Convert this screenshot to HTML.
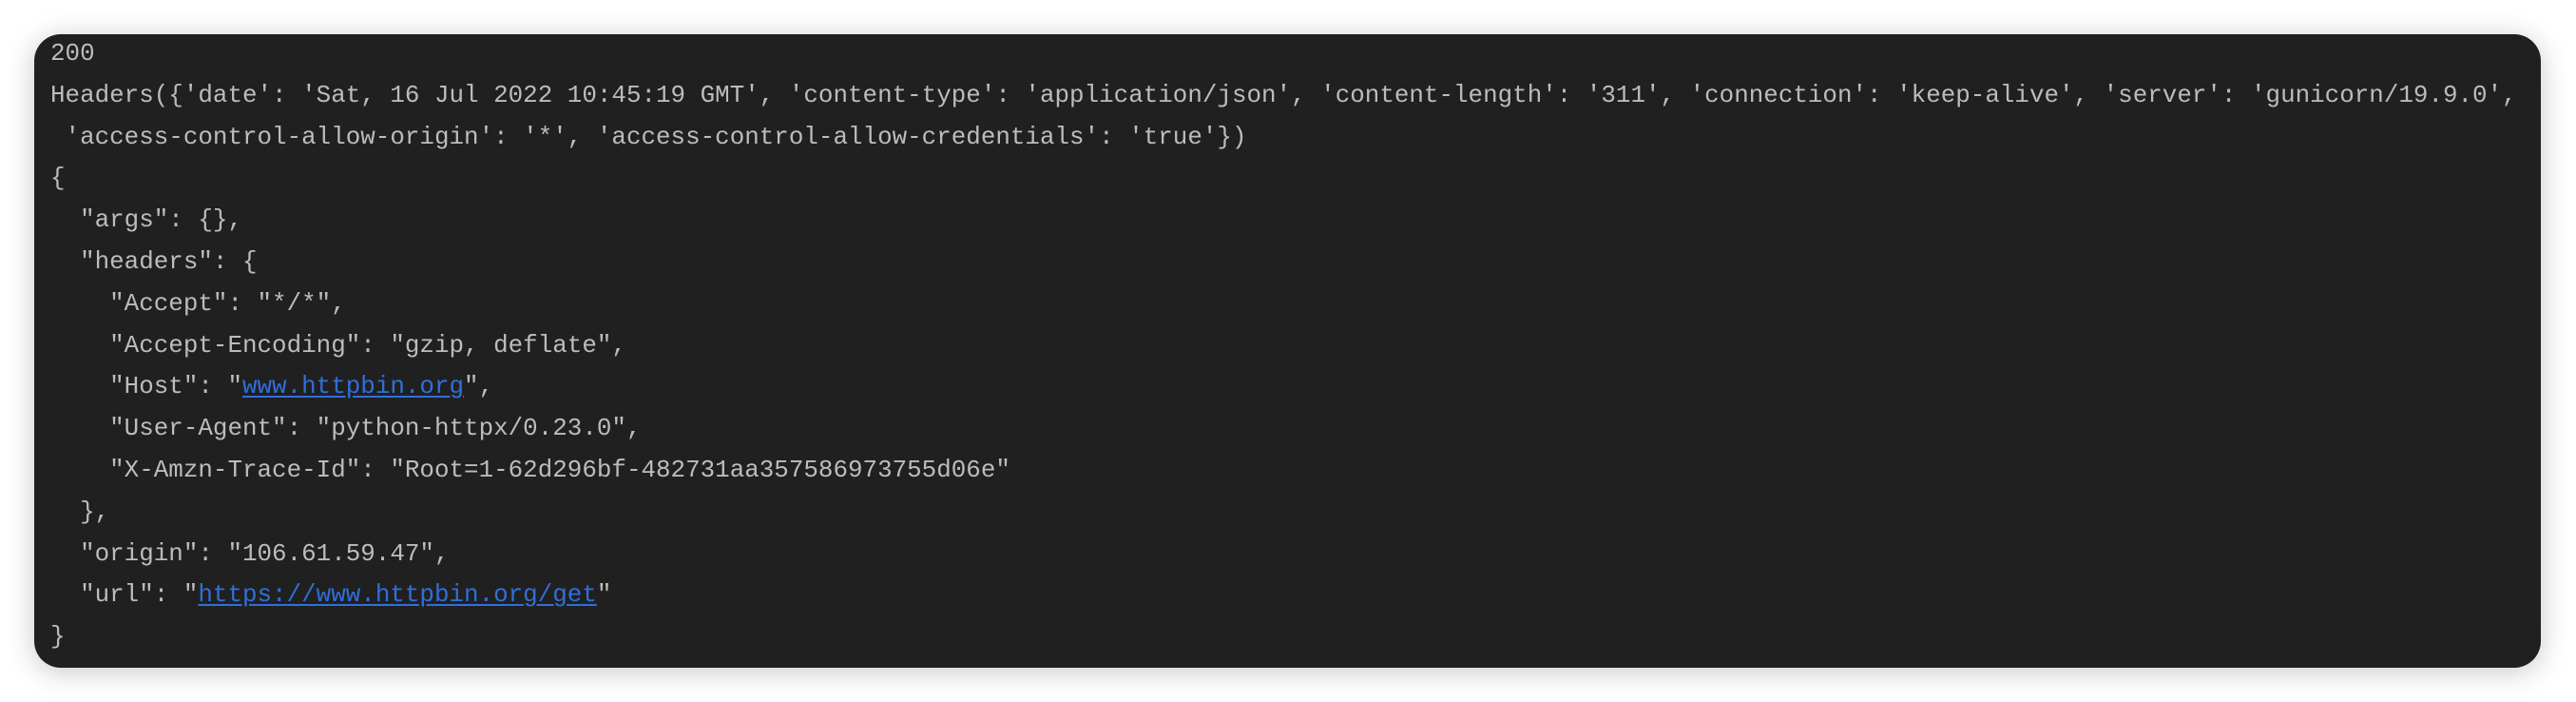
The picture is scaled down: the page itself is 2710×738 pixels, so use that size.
<!DOCTYPE html>
<html><head><meta charset="utf-8"><style>
html,body{margin:0;padding:0;background:#fff;width:2710px;height:738px;overflow:hidden}
.panel{position:absolute;left:36px;top:36px;width:2637px;height:666px;background:#202020;border-radius:28px;box-shadow:0 4px 30px rgba(0,0,0,0.22)}
pre{margin:0;position:absolute;left:17px;top:-1px;font-family:"Liberation Mono","DejaVu Sans Mono",monospace;font-size:25.9px;line-height:43.8px;color:#bcbcbc;white-space:pre}
a{color:#2f6fdc;text-decoration:underline;text-underline-offset:3px}
</style></head><body>
<div class="panel"><pre>200
Headers({'date': 'Sat, 16 Jul 2022 10:45:19 GMT', 'content-type': 'application/json', 'content-length': '311', 'connection': 'keep-alive', 'server': 'gunicorn/19.9.0',
 'access-control-allow-origin': '*', 'access-control-allow-credentials': 'true'})
{
  "args": {},
  "headers": {
    "Accept": "*/*",
    "Accept-Encoding": "gzip, deflate",
    "Host": "<a>www.httpbin.org</a>",
    "User-Agent": "python-httpx/0.23.0",
    "X-Amzn-Trace-Id": "Root=1-62d296bf-482731aa357586973755d06e"
  },
  "origin": "106.61.59.47",
  "url": "<a>https://www.httpbin.org/get</a>"
}</pre></div>
</body></html>
